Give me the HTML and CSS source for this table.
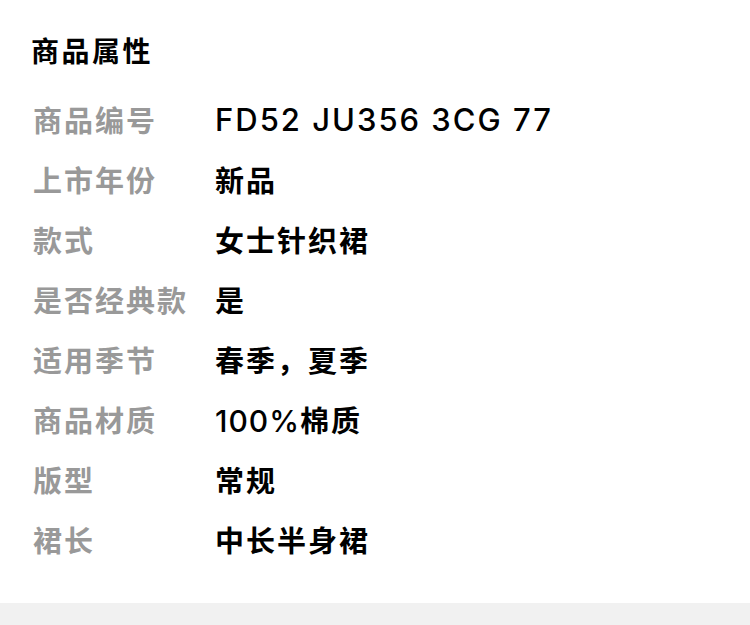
FILE: index.html
```html
<!DOCTYPE html>
<html lang="zh-CN">
<head>
    <meta charset="UTF-8">
    <meta name="viewport" content="width=device-width, initial-scale=1.0">
    <title>商品属性</title>
    <link rel="stylesheet" href="styles.css">
</head>
<body>
    <div class="attrs">
        <h2 class="attrs-title">商品属性</h2>
        <div class="attr-list">
            <div class="attr-row"><span class="attr-label">商品编号</span><span class="attr-value code">FD52 JU356 3CG 77</span></div>
            <div class="attr-row"><span class="attr-label">上市年份</span><span class="attr-value">新品</span></div>
            <div class="attr-row"><span class="attr-label">款式</span><span class="attr-value">女士针织裙</span></div>
            <div class="attr-row"><span class="attr-label">是否经典款</span><span class="attr-value">是</span></div>
            <div class="attr-row"><span class="attr-label">适用季节</span><span class="attr-value">春季，夏季</span></div>
            <div class="attr-row"><span class="attr-label">商品材质</span><span class="attr-value"><span class="num">100%</span>棉质</span></div>
            <div class="attr-row"><span class="attr-label">版型</span><span class="attr-value">常规</span></div>
            <div class="attr-row"><span class="attr-label">裙长</span><span class="attr-value">中长半身裙</span></div>
        </div>
    </div>
    <div class="gap-bar"></div>
</body>
</html>
```
FILE: styles.css
```css
body {
    margin: 0;
    padding: 0;
    background: #fff;
    color: #000;
    font-family: "Noto Sans", "Noto Sans CJK SC", sans-serif;
}
.attrs {
    padding: 31px 0 34px 31px;
}
.attrs-title {
    margin: 0 0 18px;
    font-size: 28px;
    line-height: 40px;
    font-weight: 700;
    letter-spacing: 2.5px;
}
.attr-row {
    display: flex;
    height: 60px;
    align-items: center;
    font-size: 29px;
    letter-spacing: 2px;
}
.attr-label {
    width: 184px;
    flex-shrink: 0;
    color: #999;
    font-weight: 700;
    padding-left: 2px;
    box-sizing: border-box;
}
.attr-value {
    font-weight: 700;
}
.attr-value.code {
    font-family: Inter, "Noto Sans", sans-serif;
    font-weight: 500;
    font-size: 31px;
    letter-spacing: 2px;
}
.num {
    font-family: Inter, "Noto Sans", sans-serif;
    font-weight: 500;
    font-size: 30px;
    letter-spacing: 1px;
}
.gap-bar {
    height: 22px;
    background: #f1f1f1;
}
```
